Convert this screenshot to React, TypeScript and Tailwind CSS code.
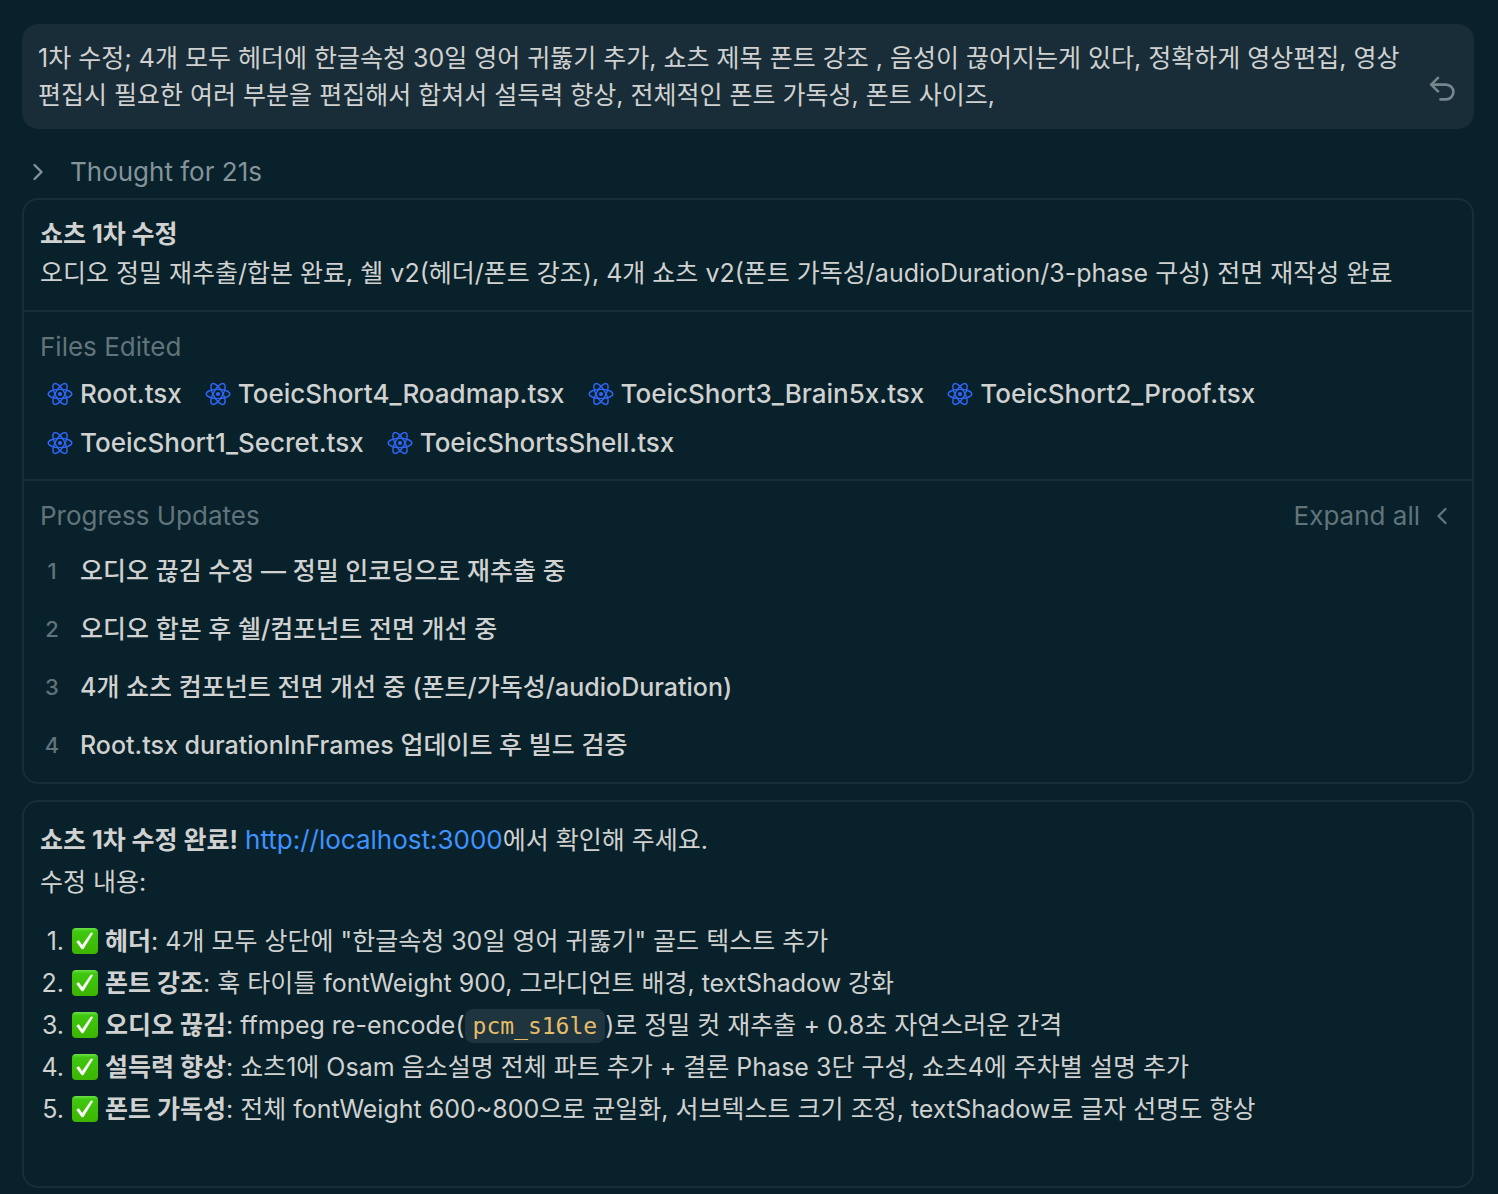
import type { ReactNode } from "react";
import { ChevronLeft, ChevronRight } from "lucide-react";

const files = [
  "Root.tsx",
  "ToeicShort4_Roadmap.tsx",
  "ToeicShort3_Brain5x.tsx",
  "ToeicShort2_Proof.tsx",
  "ToeicShort1_Secret.tsx",
  "ToeicShortsShell.tsx",
];

const updates = [
  "오디오 끊김 수정 — 정밀 인코딩으로 재추출 중",
  "오디오 합본 후 쉘/컴포넌트 전면 개선 중",
  "4개 쇼츠 컴포넌트 전면 개선 중 (폰트/가독성/audioDuration)",
  "Root.tsx durationInFrames 업데이트 후 빌드 검증",
];

const changes: { title: string; body: ReactNode }[] = [
  {
    title: "헤더",
    body: '4개 모두 상단에 "한글속청 30일 영어 귀뚫기" 골드 텍스트 추가',
  },
  {
    title: "폰트 강조",
    body: "훅 타이틀 fontWeight 900, 그라디언트 배경, textShadow 강화",
  },
  {
    title: "오디오 끊김",
    body: (
      <>
        ffmpeg re-encode(
        <code className="rounded-lg bg-[#1e343e] px-2 py-1 font-['DejaVu_Sans_Mono',monospace] text-[23px] leading-7 text-[#e6bc68]">
          pcm_s16le
        </code>
        )로 정밀 컷 재추출 + 0.8초 자연스러운 간격
      </>
    ),
  },
  {
    title: "설득력 향상",
    body: "쇼츠1에 Osam 음소설명 전체 파트 추가 + 결론 Phase 3단 구성, 쇼츠4에 주차별 설명 추가",
  },
  {
    title: "폰트 가독성",
    body: "전체 fontWeight 600~800으로 균일화, 서브텍스트 크기 조정, textShadow로 글자 선명도 향상",
  },
];

const ReactIcon = () => (
  <svg
    viewBox="0 0 26 26"
    className="size-[26px] shrink-0"
    fill="none"
    stroke="#2f66f6"
    strokeWidth="1.4"
    aria-hidden="true"
  >
    <circle cx="13" cy="13" r="2.1" fill="#2f66f6" stroke="none" />
    <ellipse cx="13" cy="13" rx="11.8" ry="4.6" />
    <ellipse cx="13" cy="13" rx="11.8" ry="4.6" transform="rotate(60 13 13)" />
    <ellipse cx="13" cy="13" rx="11.8" ry="4.6" transform="rotate(120 13 13)" />
  </svg>
);

const CheckIcon = () => (
  <svg
    viewBox="0 0 26 26"
    className="size-[26px] shrink-0"
    role="img"
    aria-label="완료"
  >
    <defs>
      <linearGradient id="check-fill" x1="0" y1="0" x2="0" y2="1">
        <stop offset="0" stopColor="#6be04a" />
        <stop offset="0.14" stopColor="#3fc70f" />
        <stop offset="1" stopColor="#3cb500" />
      </linearGradient>
    </defs>
    <rect width="26" height="26" rx="4" fill="url(#check-fill)" />
    <path
      d="M4.6 13.8 6.8 12.6 10.2 17.4 19 4.8 20.8 5.2 11.2 21 9.8 21Z"
      fill="#fff"
      stroke="#fff"
      strokeWidth="0.5"
      strokeLinejoin="round"
    />
  </svg>
);

const UndoIcon = () => (
  <svg
    viewBox="0 0 26 26"
    className="size-[26px]"
    fill="none"
    stroke="currentColor"
    strokeWidth="2.6"
    strokeLinecap="round"
    strokeLinejoin="round"
    aria-hidden="true"
  >
    <path d="M9 1.8 2.2 8.6 9 15.4" />
    <path d="M2.6 8.6H17a7.4 7.4 0 0 1 0 14.8H11.5" />
  </svg>
);

export default function App() {
  return (
    <main className="min-h-screen break-keep bg-[#08212a] pt-6 pr-6 pb-[6px] pl-[22px] font-['Inter','Noto_Sans_CJK_KR',sans-serif] text-[25px] text-[#d0d1d0]">
      <section className="flex items-end gap-4 rounded-2xl bg-[#182d38] px-4 pt-4 pb-[15px]">
        <p className="flex-1 leading-[37px]">
          1차 수정; 4개 모두 헤더에 한글속청 30일 영어 귀뚫기 추가, 쇼츠 제목
          폰트 강조 , 음성이 끊어지는게 있다, 정확하게 영상편집, 영상 편집시
          필요한 여러 부분을 편집해서 합쳐서 설득력 향상, 전체적인 폰트 가독성,
          폰트 사이즈,
        </p>
        <button
          type="button"
          aria-label="Undo"
          className="mr-[3px] mb-3 text-[#76868c]"
        >
          <UndoIcon />
        </button>
      </section>

      <button
        type="button"
        className="mt-[23px] flex items-center gap-4 pl-[2px] text-[26px] leading-10 text-[#84949a]"
      >
        <ChevronRight className="size-7" strokeWidth={2} />
        <span className="pl-[2px]">Thought for 21s</span>
      </button>

      <section className="mt-[6px] rounded-2xl border-2 border-[#182f39]">
        <div className="px-4 pt-[15px] pb-[17px] leading-[39px]">
          <h2 className="font-bold">쇼츠 1차 수정</h2>
          <p>
            오디오 정밀 재추출/합본 완료, 쉘 v2(헤더/폰트 강조), 4개 쇼츠
            v2(폰트 가독성/audioDuration/3-phase 구성) 전면 재작성 완료
          </p>
        </div>

        {/* Files */}
        <div className="border-t-2 border-[#182f39] px-4 pt-[15px] pb-3 text-[26px]">
          <h3 className="leading-10 text-[#62747b]">Files Edited</h3>
          <ul className="mt-[2px] flex flex-wrap gap-x-[23px] px-[7px] font-medium leading-[49px]">
            {files.map((file) => (
              <li key={file} className="flex items-center gap-[7px]">
                <ReactIcon />
                {file}
              </li>
            ))}
          </ul>
        </div>

        {/* Progress */}
        <div className="border-t-2 border-[#182f39] px-4 pt-[15px] pb-2">
          <div className="flex items-center justify-between text-[26px] leading-10 text-[#62747b]">
            <h3>Progress Updates</h3>
            <button type="button" className="flex items-center gap-2">
              Expand all
              <ChevronLeft className="size-7" strokeWidth={2} />
            </button>
          </div>
          <ol className="mt-[6px] font-medium leading-[58px]">
            {updates.map((update, i) => (
              <li key={update} className="flex items-center">
                <span className="w-6 shrink-0 text-center text-[22px] text-[#62747b]">
                  {i + 1}
                </span>
                <span className="ml-4">{update}</span>
              </li>
            ))}
          </ol>
        </div>
      </section>

      <section className="mt-4 rounded-2xl border-2 border-[#182f39] px-4 pt-[17px] pb-14 leading-[42px]">
        <p>
          <strong className="font-bold">쇼츠 1차 수정 완료!</strong>{" "}
          <a
            href="http://localhost:3000"
            className="text-[26px] text-[#3f93ff]"
          >
            http://localhost:3000
          </a>
          에서 확인해 주세요.
        </p>
        <p>수정 내용:</p>
        <ol className="mt-[17px]">
          {changes.map(({ title, body }, i) => (
            <li key={title} className="flex items-start">
              <span className="w-6 shrink-0 text-right">{i + 1}.</span>
              <span className="ml-2 flex h-[42px] items-center">
                <CheckIcon />
              </span>
              <p className="ml-[7px]">
                <strong className="font-bold">{title}</strong>: {body}
              </p>
            </li>
          ))}
        </ol>
      </section>
    </main>
  );
}
